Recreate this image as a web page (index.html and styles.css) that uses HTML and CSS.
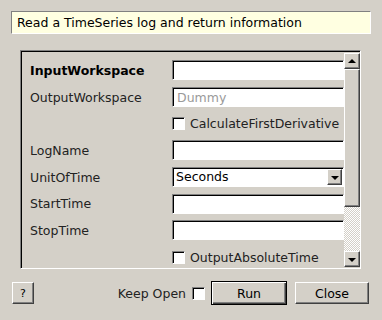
FILE: index.html
```html
<!doctype html>
<html>
<head>
    <meta charset="UTF-8">
    <title>LogInfo</title>
    <link rel="stylesheet" href="styles.css">
</head>
<body>
    <div class="dialog">
        <div class="description">Read a TimeSeries log and return information</div>

        <div class="frame">
            <div class="props">
                <label class="name mandatory">InputWorkspace</label>
                <div class="field"><span class="textbox"></span></div>

                <label class="name">OutputWorkspace</label>
                <div class="field"><span class="textbox placeholder">Dummy</span></div>

                <span></span>
                <div class="field"><span class="check"></span><span class="check-label">CalculateFirstDerivative</span></div>

                <label class="name">LogName</label>
                <div class="field"><span class="textbox"></span></div>

                <label class="name">UnitOfTime</label>
                <div class="field">
                    <span class="combo">Seconds<span class="combo-btn"><span class="arrow-down"></span></span></span>
                </div>

                <label class="name">StartTime</label>
                <div class="field"><span class="textbox"></span></div>

                <label class="name">StopTime</label>
                <div class="field"><span class="textbox"></span></div>

                <span></span>
                <div class="field"><span class="check"></span><span class="check-label">OutputAbsoluteTime</span></div>
            </div>

            <div class="scrollbar">
                <div class="sb-btn"><span class="arrow-up"></span></div>
                <div class="sb-thumb"></div>
                <div class="sb-track"></div>
                <div class="sb-btn"><span class="arrow-down"></span></div>
            </div>
        </div>

        <div class="buttons">
            <button class="btn help">?</button>
            <span class="spacer"></span>
            <span class="keep">Keep Open</span>
            <span class="check keep-check"></span>
            <button class="btn run">Run</button>
            <button class="btn close">Close</button>
        </div>
    </div>
</body>
</html>
```

FILE: styles.css
```css
html, body {
    margin: 0;
    padding: 0;
    background-color: #d4d0c8;
}
body {
    font-family: "DejaVu Sans", sans-serif;
    font-size: 12.5px;
    color: #000;
}
.dialog {
    width: 382px;
    height: 320px;
    box-sizing: border-box;
    padding: 11px 11px 0 11px;
}
.description {
    height: 23px;
    box-sizing: border-box;
    background-color: #ffffe1;
    border: 1px solid;
    border-color: #808080 #ffffff #ffffff #808080;
    padding: 2px 0 0 5px;
    line-height: 17px;
}
.frame {
    margin: 16px 10px 0 9px;
    height: 219px;
    box-sizing: border-box;
    border: 1px solid;
    border-color: #808080 #ffffff #ffffff #808080;
    box-shadow: inset 1px 1px 0 #000;
    display: flex;
    padding: 2px 0 1px 2px;
}
.props {
    flex: 1;
    display: grid;
    grid-template-columns: 142px 172px;
    grid-auto-rows: 26.7px;
    padding: 4px 0 0 7px;
    overflow: hidden;
}
.name {
    display: flex;
    align-items: center;
    color: #222;
}
.mandatory {
    font-weight: bold;
    color: #000;
}
.field {
    display: flex;
    align-items: center;
}
.textbox, .combo {
    display: block;
    width: 100%;
    height: 20px;
    box-sizing: border-box;
    background-color: #fff;
    border: 1px solid;
    border-color: #808080 #ffffff #ffffff #808080;
    box-shadow: inset 1px 1px 0 #000;
    padding: 1px 0 0 4px;
    line-height: 17px;
}
.placeholder {
    color: #9a9a9a;
}
.combo {
    display: flex;
    align-items: center;
    justify-content: space-between;
    padding: 1px 1px 1px 3px;
    line-height: 16px;
}
.combo-btn {
    width: 15px;
    height: 16px;
    box-sizing: border-box;
    background-color: #d4d0c8;
    border: 1px solid;
    border-color: #ffffff #404040 #404040 #ffffff;
    box-shadow: inset -1px -1px 0 #808080;
    display: flex;
    align-items: center;
    justify-content: center;
}
.check {
    display: inline-block;
    width: 13px;
    height: 13px;
    box-sizing: border-box;
    background-color: #fff;
    border: 1px solid;
    border-color: #808080 #ffffff #ffffff #808080;
    box-shadow: inset 1px 1px 0 #000;
    flex: none;
}
.check-label {
    margin-left: 5px;
    color: #222;
}
.arrow-down, .arrow-up {
    width: 0;
    height: 0;
    border-left: 4px solid transparent;
    border-right: 4px solid transparent;
}
.arrow-down {
    border-top: 4px solid #000;
    margin-top: 1px;
}
.arrow-up {
    border-bottom: 4px solid #000;
    margin-bottom: 1px;
}
.scrollbar {
    width: 16px;
    display: flex;
    flex-direction: column;
    flex: none;
}
.sb-btn, .sb-thumb {
    box-sizing: border-box;
    background-color: #d4d0c8;
    border: 1px solid;
    border-color: #ffffff #404040 #404040 #ffffff;
    box-shadow: inset -1px -1px 0 #808080;
}
.sb-btn {
    height: 16px;
    display: flex;
    align-items: center;
    justify-content: center;
}
.sb-thumb {
    height: 138px;
}
.sb-track {
    flex: 1;
    background-color: #e8e6e2;
    background-image: repeating-conic-gradient(#ffffff 0 25%, #d4d0c8 0 50%);
    background-size: 2px 2px;
}
.buttons {
    display: flex;
    align-items: center;
    margin-top: 12px;
    padding-left: 1px;
    padding-right: 2px;
}
.spacer {
    flex: 1;
}
.btn {
    font-family: "DejaVu Sans", sans-serif;
    font-size: 12.5px;
    color: #000;
    height: 22px;
    box-sizing: border-box;
    background-color: #d4d0c8;
    border: 1px solid;
    border-color: #ffffff #404040 #404040 #ffffff;
    box-shadow: inset -1px -1px 0 #808080;
    padding: 0;
}
.help {
    width: 22px;
    font-size: 11px;
}
.keep {
    color: #222;
}
.keep-check {
    margin: 0 6px 0 6px;
}
.run {
    width: 76px;
    height: 24px;
    border: 1px solid #000;
    box-shadow: inset 1px 1px 0 #ffffff, inset -1px -1px 0 #404040, inset -2px -2px 0 #808080;
}
.close {
    width: 74px;
    margin-left: 8px;
}
```
